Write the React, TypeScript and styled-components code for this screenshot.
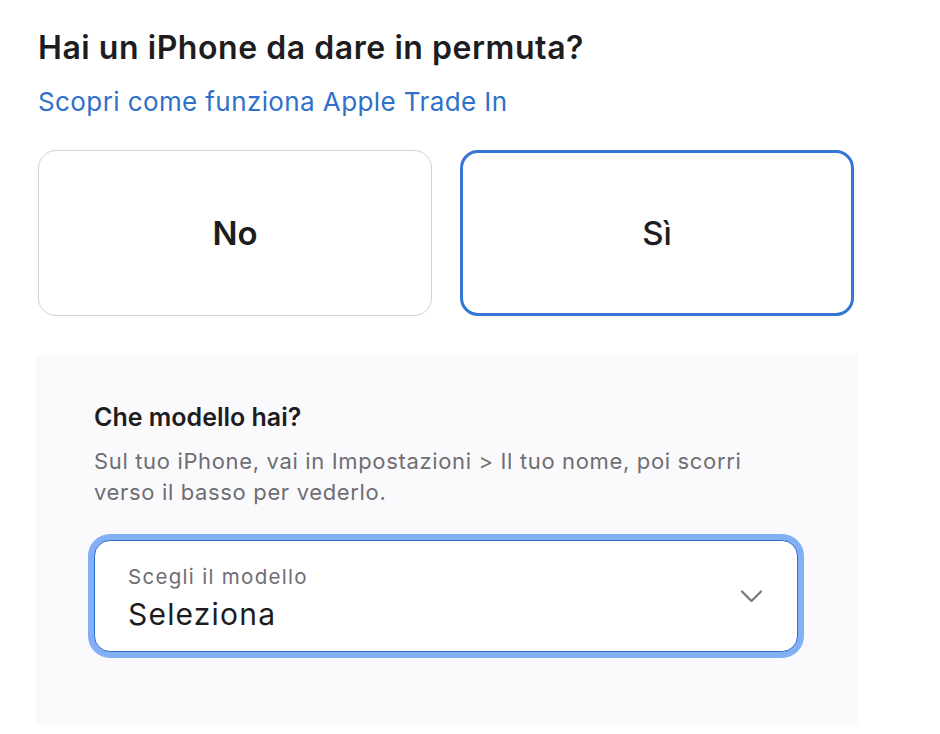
import { useState } from 'react'
import styled, { createGlobalStyle } from 'styled-components'

const GlobalStyle = createGlobalStyle`
    body {
        margin: 0;
        background: #ffffff;
        font-family: Inter, "Liberation Sans", sans-serif;
        color: #1d1d1f;
    }
`

const App = () => {
    const [choice, setChoice] = useState<'no' | 'si'>('si')

    return (
        <Page>
            <GlobalStyle />
            <Title>Hai un iPhone da dare in permuta?</Title>
            <Link href="#">Scopri come funziona Apple Trade In</Link>
            <Choices>
                <Choice selected={choice === 'no'} onClick={() => setChoice('no')}>
                    <ChoiceText bold>No</ChoiceText>
                </Choice>
                <Choice selected={choice === 'si'} onClick={() => setChoice('si')}>
                    <ChoiceText>Sì</ChoiceText>
                </Choice>
            </Choices>
            <Panel>
                <PanelTitle>Che modello hai?</PanelTitle>
                <Hint>
                    Sul tuo iPhone, vai in Impostazioni &gt; Il tuo nome, poi scorri
                    <br />
                    verso il basso per vederlo.
                </Hint>
                <Select>
                    <SelectTexts>
                        <SelectLabel>Scegli il modello</SelectLabel>
                        <SelectValue>Seleziona</SelectValue>
                    </SelectTexts>
                    <Chevron width="23" height="15" viewBox="0 0 23 15">
                        <path d="M2 2.5 L11.5 12 L21 2.5" fill="none" stroke="#77777c" strokeWidth="2.2" strokeLinecap="round" strokeLinejoin="round" />
                    </Chevron>
                </Select>
            </Panel>
        </Page>
    )
}

const Page = styled.div`
    padding: 28px 0 0 38px;
    width: 822px;
`

const Title = styled.h2`
    margin: 0;
    font-size: 32px;
    font-weight: 600;
    line-height: 40px;
    letter-spacing: 0.55px;
    color: #1d1d1f;
`

const Link = styled.a`
    display: block;
    margin-top: 18px;
    font-size: 26px;
    line-height: 32px;
    letter-spacing: 0.4px;
    color: #2f70ca;
    text-decoration: none;
`

const Choices = styled.div`
    display: grid;
    grid-template-columns: 394px 394px;
    column-gap: 28px;
    margin-top: 32px;
`

const Choice = styled.button<{ selected: boolean }>`
    height: 166px;
    display: flex;
    align-items: center;
    justify-content: center;
    background: #ffffff;
    border-radius: 18px;
    cursor: pointer;
    font-family: inherit;
    border: ${(p) => (p.selected ? '3px solid #3475d5' : '1.5px solid #d2d2d7')};
`

const ChoiceText = styled.span<{ bold?: boolean }>`
    font-size: 33px;
    line-height: 40px;
    font-weight: ${(p) => (p.bold ? 600 : 500)};
    color: #1d1d1f;
`

const Panel = styled.section`
    margin: 39px 2px 0 -2px;
    background: #fafafc;
    padding: 47px 58px 0;
    height: 369px;
    box-sizing: border-box;
`

const PanelTitle = styled.h3`
    margin: 0;
    font-size: 25px;
    font-weight: 600;
    line-height: 30px;
    color: #1d1d1f;
`

const Hint = styled.p`
    margin: 14px 0 0;
    font-size: 22px;
    line-height: 31px;
    letter-spacing: 0.65px;
    color: #6e6e73;
`

const Select = styled.div`
    margin-top: 32px;
    width: 704px;
    height: 112px;
    box-sizing: border-box;
    display: flex;
    align-items: flex-start;
    justify-content: space-between;
    padding: 24px 34px 0 33px;
    background: #ffffff;
    border: 1.5px solid #2f6fd0;
    border-radius: 16px;
    box-shadow: 0 0 0 6px #82aff5;
`

const SelectTexts = styled.div`
    display: flex;
    flex-direction: column;
`

const SelectLabel = styled.span`
    font-size: 20.5px;
    line-height: 24px;
    letter-spacing: 1.3px;
    color: #6e6e73;
`

const SelectValue = styled.span`
    margin-top: 6.5px;
    font-size: 30px;
    line-height: 36px;
    letter-spacing: 1.2px;
    color: #1d1d1f;
`

const Chevron = styled.svg`
    align-self: center;
    margin-top: -24px;
`

export default App
